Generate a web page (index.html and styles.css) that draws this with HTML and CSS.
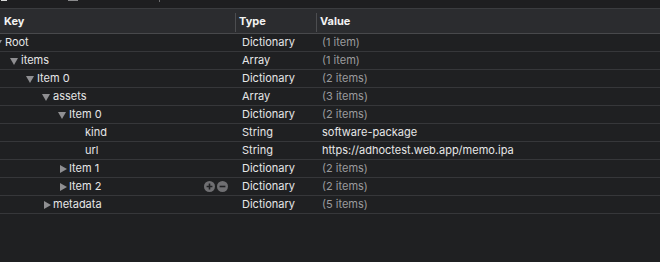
FILE: index.html
```html
<!DOCTYPE html>
<html lang="en">
<head>
    <meta charset="UTF-8">
    <title>Info.plist</title>
    <link rel="stylesheet" href="styles.css">
</head>
<body>
    <div class="toolbar-edge">
        <span class="edge-mark light"></span>
        <span class="edge-mark grey"></span>
        <span class="edge-mark tick"></span>
    </div>

    <div class="plist">
        <div class="plist-header">
            <div class="head-cell">Key</div>
            <div class="head-cell sep">Type</div>
            <div class="head-cell sep">Value</div>
        </div>

        <div class="plist-row">
            <div class="key lvl-0"><span class="disclosure open"></span>Root</div>
            <div class="type">Dictionary</div>
            <div class="value muted">(1 item)</div>
        </div>
        <div class="plist-row">
            <div class="key lvl-1"><span class="disclosure open"></span>items</div>
            <div class="type">Array</div>
            <div class="value muted">(1 item)</div>
        </div>
        <div class="plist-row">
            <div class="key lvl-2"><span class="disclosure open"></span>Item 0</div>
            <div class="type">Dictionary</div>
            <div class="value muted">(2 items)</div>
        </div>
        <div class="plist-row">
            <div class="key lvl-3"><span class="disclosure open"></span>assets</div>
            <div class="type">Array</div>
            <div class="value muted">(3 items)</div>
        </div>
        <div class="plist-row">
            <div class="key lvl-4"><span class="disclosure open"></span>Item 0</div>
            <div class="type">Dictionary</div>
            <div class="value muted">(2 items)</div>
        </div>
        <div class="plist-row">
            <div class="key lvl-5"><span class="disclosure"></span>kind</div>
            <div class="type">String</div>
            <div class="value">software-package</div>
        </div>
        <div class="plist-row">
            <div class="key lvl-5"><span class="disclosure"></span>url</div>
            <div class="type">String</div>
            <div class="value">https://adhoctest.web.app/memo.ipa</div>
        </div>
        <div class="plist-row">
            <div class="key lvl-4"><span class="disclosure closed"></span>Item 1</div>
            <div class="type">Dictionary</div>
            <div class="value muted">(2 items)</div>
        </div>
        <div class="plist-row">
            <div class="key lvl-4">
                <span class="disclosure closed"></span>Item 2
                <span class="row-actions">
                    <svg class="row-btn" width="11" height="11" viewBox="0 0 11 11">
                        <circle cx="5.5" cy="5.5" r="5.5" fill="#6f6f72"/>
                        <path d="M5.5 2.6v5.8M2.6 5.5h5.8" stroke="#1f2022" stroke-width="1.6"/>
                    </svg>
                    <svg class="row-btn" width="11" height="11" viewBox="0 0 11 11">
                        <circle cx="5.5" cy="5.5" r="5.5" fill="#6f6f72"/>
                        <path d="M2.6 5.5h5.8" stroke="#1f2022" stroke-width="1.6"/>
                    </svg>
                </span>
            </div>
            <div class="type">Dictionary</div>
            <div class="value muted">(2 items)</div>
        </div>
        <div class="plist-row">
            <div class="key lvl-3"><span class="disclosure closed"></span>metadata</div>
            <div class="type">Dictionary</div>
            <div class="value muted">(5 items)</div>
        </div>
    </div>
</body>
</html>
```

FILE: styles.css
```css
* {
    box-sizing: border-box;
    margin: 0;
    padding: 0;
}

body {
    background: #1f2022;
    color: #e2e2e3;
    font-family: Inter, 'Liberation Sans', sans-serif;
    font-size: 11px;
    width: 660px;
    height: 262px;
    overflow: hidden;
}

/* Cut-off toolbar above the editor */
.toolbar-edge {
    height: 8px;
    background: #1e1e20;
    display: flex;
    align-items: flex-start;
}

.edge-mark {
    height: 1px;
}

.edge-mark.light {
    width: 6px;
    margin-left: 1px;
    background: #d8d8d8;
}

.edge-mark.grey {
    width: 10px;
    margin-left: 61px;
    background: #8a8a8c;
}

.edge-mark.tick {
    width: 1px;
    margin-left: 81px;
    height: 2px;
    background: #6a6a6c;
}

/* Header */
.plist-header {
    display: grid;
    grid-template-columns: 235px 81px 1fr;
    height: 26px;
    background: #2b2c2f;
    border-top: 1px solid #3b3c3f;
    border-bottom: 1px solid #48494c;
}

.head-cell {
    position: relative;
    padding-left: 4px;
    line-height: 24px;
    font-weight: 700;
    color: #f2f2f2;
}

.head-cell.sep::before {
    content: "";
    position: absolute;
    left: 0;
    top: 4px;
    bottom: 1px;
    width: 1px;
    background: #4c4d50;
}

/* Rows */
.plist-row {
    display: grid;
    grid-template-columns: 235px 81px 1fr;
    height: 18px;
    line-height: 17px;
    border-bottom: 1px solid #36373a;
}

.key {
    display: flex;
    align-items: center;
    color: #e6e6e7;
    white-space: nowrap;
    padding-right: 7px;
}

.lvl-0 { padding-left: 0; margin-left: -6px; }
.lvl-1 { padding-left: 10px; }
.lvl-2 { padding-left: 26px; }
.lvl-3 { padding-left: 42px; }
.lvl-4 { padding-left: 58px; }
.lvl-5 { padding-left: 74px; }

.disclosure {
    width: 11px;
    height: 8px;
    flex-shrink: 0;
    position: relative;
}

.disclosure.open::after {
    content: "";
    position: absolute;
    left: 0;
    top: 1px;
    border-left: 4.5px solid transparent;
    border-right: 4.5px solid transparent;
    border-top: 7px solid #8f8f92;
}

.disclosure.closed::after {
    content: "";
    position: absolute;
    left: 2px;
    top: 0;
    border-top: 4px solid transparent;
    border-bottom: 4px solid transparent;
    border-left: 7px solid #8f8f92;
}

.row-actions {
    margin-left: auto;
    display: flex;
    gap: 2px;
}

.row-btn {
    display: block;
}

.type {
    padding-left: 7px;
    color: #e6e6e7;
}

.value {
    padding-left: 6px;
    color: #e6e6e7;
}

.value.muted {
    color: #9b9b9d;
}
```
